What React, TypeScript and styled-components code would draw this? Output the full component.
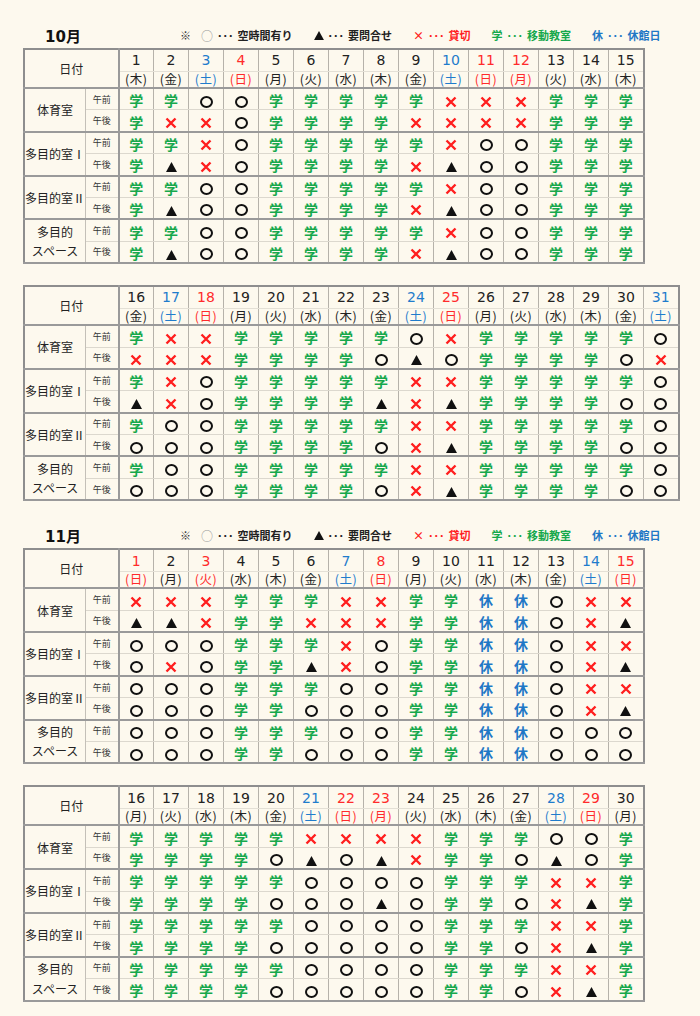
import React from 'react';
import styled, { createGlobalStyle } from 'styled-components';

const GlobalStyle = createGlobalStyle`
  html, body {
    margin: 0;
    padding: 0;
    background: #fdf9ee;
  }
  body {
    font-family: 'Noto Sans CJK JP', 'Noto Sans', sans-serif;
    color: #222;
  }
`;

type Tone = 'plain' | 'sat' | 'sun';

const HOLIDAYS = ['10-12', '11-3', '11-23'];
const WEEK = ['日', '月', '火', '水', '木', '金', '土'];

const ROOMS = [['体育室'], ['多目的室Ⅰ'], ['多目的室Ⅱ'], ['多目的', 'スペース']];

// g=学 o=○ t=▲ x=× k=休 ; 2 rows (午前/午後) per room
const MONTHS = [
  {
    month: 10,
    blocks: [
      {
        from: 1,
        to: 15,
        rows: [
          'ggoogggggxxxggg',
          'gxxoggggxxxxggg',
          'ggxogggggxooggg',
          'gtxoggggxtooggg',
          'ggoogggggxooggg',
          'gtooggggxtooggg',
          'ggoogggggxooggg',
          'gtooggggxtooggg',
        ],
      },
      {
        from: 16,
        to: 31,
        rows: [
          'gxxgggggoxgggggo',
          'xxxggggotoggggox',
          'gxogggggxxgggggo',
          'txoggggtxtggggoo',
          'googggggxxgggggo',
          'oooggggoxtggggoo',
          'googggggxxgggggo',
          'oooggggoxtggggoo',
        ],
      },
    ],
  },
  {
    month: 11,
    blocks: [
      {
        from: 1,
        to: 15,
        rows: [
          'xxxgggxxggkkoxx',
          'ttxggxxxggkkoxt',
          'ooogggxoggkkoxx',
          'oxoggtxoggkkoxt',
          'ooogggooggkkoxx',
          'oooggoooggkkoxt',
          'ooogggooggkkooo',
          'oooggoooggkkooo',
        ],
      },
      {
        from: 16,
        to: 30,
        rows: [
          'gggggxxxxgggoog',
          'ggggototxggotog',
          'gggggoooogggxxg',
          'ggggoootoggoxtg',
          'gggggoooogggxxg',
          'ggggoooooggoxtg',
          'gggggoooogggxxg',
          'ggggoooooggoxtg',
        ],
      },
    ],
  },
];

const toneOf = (m: number, d: number): Tone => {
  const wd = new Date(2020, m - 1, d).getDay();
  if (wd === 0 || HOLIDAYS.includes(`${m}-${d}`)) return 'sun';
  if (wd === 6) return 'sat';
  return 'plain';
};

const TONE_COLOR: Record<Tone, string> = {
  plain: '#222',
  sat: '#1f7ccc',
  sun: '#ff2b2b',
};

const Page = styled.div`
  padding: 22px 0 20px 23px;
  display: flex;
  flex-direction: column;
  gap: 21px;
`;

const Section = styled.section`
  display: flex;
  flex-direction: column;
`;

const Tables = styled.div`
  display: flex;
  flex-direction: column;
  align-items: flex-start;
  gap: 21px;
`;

const Heading = styled.div`
  height: 26px;
  display: flex;
  align-items: center;
  padding-left: 22px;
`;

const Title = styled.h2`
  width: 135px;
  margin: 0;
  font-family: 'DejaVu Sans', 'Noto Sans CJK JP', sans-serif;
  font-size: 15px;
  font-weight: 700;
  color: #111;
`;

const Legend = styled.div`
  display: flex;
  align-items: center;
  gap: 21px;
  font-size: 11px;
  font-weight: 700;
`;

const LegendItem = styled.span<{ $color: string }>`
  display: inline-flex;
  align-items: center;
  gap: 4px;
  color: ${(p) => p.$color};
`;

const Note = styled.span`
  color: #333;
  font-weight: 400;
  margin-right: 6px;
`;

const ThinCircle = styled.span`
  color: #999;
  font-weight: 400;
  font-size: 12px;
`;

const Table = styled.table`
  border-collapse: collapse;
  table-layout: fixed;
  border: 2px solid #8e8e8e;
  background: #fdf9ee;
`;

const Col = styled.col<{ $w: number }>`
  width: ${(p) => p.$w}px;
`;

const DateLabel = styled.th`
  font-size: 12px;
  font-weight: 400;
  border-right: 2px solid #9a9a9a;
  border-bottom: 2px solid #9a9a9a;
  padding: 0;
`;

const DayNum = styled.th<{ $tone: Tone }>`
  height: 20.5px;
  padding: 0;
  font-family: 'DejaVu Sans', sans-serif;
  font-size: 14px;
  font-weight: 400;
  line-height: 1;
  color: ${(p) => TONE_COLOR[p.$tone]};
  border-left: 1px solid #b6b2aa;
  border-bottom: 1px solid #e4e0d6;
  vertical-align: middle;
`;

const DayWeek = styled.th<{ $tone: Tone }>`
  height: 15.5px;
  padding: 0;
  font-size: 12.5px;
  font-weight: 400;
  letter-spacing: 0.5px;
  color: ${(p) => TONE_COLOR[p.$tone]};
  border-left: 1px solid #b6b2aa;
  border-bottom: 2px solid #9a9a9a;
  line-height: 1;
`;

const RoomCell = styled.th`
  font-size: 12px;
  font-weight: 400;
  line-height: 1.6;
  padding: 0;
  white-space: nowrap;
  border-right: 1px solid #c4c0b8;
  border-bottom: 2px solid #9a9a9a;
`;

const PeriodCell = styled.td<{ $end: boolean }>`
  height: 20.4px;
  padding: 0;
  font-size: 9px;
  line-height: 1;
  text-align: center;
  color: #333;
  border-right: 2px solid #9a9a9a;
  border-bottom: ${(p) => (p.$end ? '2px solid #9a9a9a' : '1px solid #dcd8ce')};
`;

const MarkCell = styled.td<{ $end: boolean }>`
  padding: 0;
  text-align: center;
  vertical-align: middle;
  line-height: 1;
  border-left: 1px solid #b6b2aa;
  border-bottom: ${(p) => (p.$end ? '2px solid #9a9a9a' : '1px solid #dcd8ce')};
`;

const Kanji = styled.span<{ $color: string }>`
  display: inline-block;
  font-size: 14px;
  font-weight: 700;
  line-height: 1;
  color: ${(p) => p.$color};
`;

const Ring = styled.span`
  display: inline-block;
  width: 13px;
  height: 12px;
  box-sizing: border-box;
  border: 2.4px solid #111;
  border-radius: 50%;
  vertical-align: middle;
`;

const Glyph = styled.svg`
  display: inline-block;
  vertical-align: middle;
`;

const Cross = () => (
  <Glyph width="12" height="12" viewBox="0 0 12 12">
    <path d="M1.5 1.5 L10.5 10.5 M10.5 1.5 L1.5 10.5" stroke="#ff1e1e" strokeWidth="2.4" />
  </Glyph>
);

const Tri = ({ size = 11 }: { size?: number }) => (
  <Glyph width={size} height={size - 1} viewBox="0 0 11 10">
    <polygon points="5.5,0 11,10 0,10" fill="#111" />
  </Glyph>
);

const Mark = ({ c }: { c: string }) => {
  switch (c) {
    case 'g':
      return <Kanji $color="#16a84c">学</Kanji>;
    case 'k':
      return <Kanji $color="#1f78c6">休</Kanji>;
    case 'o':
      return <Ring />;
    case 't':
      return <Tri />;
    default:
      return <Cross />;
  }
};

const MonthHeading = ({ month }: { month: number }) => (
  <Heading>
    <Title>{month}月</Title>
    <Legend>
      <LegendItem $color="#222">
        <Note>※</Note>
        <ThinCircle>○</ThinCircle>
        <span>･･･</span>
        <span>空時間有り</span>
      </LegendItem>
      <LegendItem $color="#222">
        <Tri size={10} />
        <span>･･･</span>
        <span>要問合せ</span>
      </LegendItem>
      <LegendItem $color="#ff1e1e">
        <span>×</span>
        <span>･･･</span>
        <span>貸切</span>
      </LegendItem>
      <LegendItem $color="#16a84c">
        <span>学</span>
        <span>･･･</span>
        <span>移動教室</span>
      </LegendItem>
      <LegendItem $color="#1f78c6">
        <span>休</span>
        <span>･･･</span>
        <span>休館日</span>
      </LegendItem>
    </Legend>
  </Heading>
);

const Schedule = ({ month, from, to, rows }: { month: number; from: number; to: number; rows: string[] }) => {
  const days = Array.from({ length: to - from + 1 }, (_, i) => from + i);
  return (
    <Table>
      <colgroup>
        <Col $w={59} />
        <Col $w={33} />
        {days.map((d) => (
          <Col key={d} $w={35} />
        ))}
      </colgroup>
      <thead>
        <tr>
          <DateLabel colSpan={2} rowSpan={2}>
            日付
          </DateLabel>
          {days.map((d) => (
            <DayNum key={d} $tone={toneOf(month, d)}>
              {d}
            </DayNum>
          ))}
        </tr>
        <tr>
          {days.map((d) => (
            <DayWeek key={d} $tone={toneOf(month, d)}>
              ({WEEK[new Date(2020, month - 1, d).getDay()]})
            </DayWeek>
          ))}
        </tr>
      </thead>
      <tbody>
        {rows.map((row, i) => {
          const end = i % 2 === 1;
          return (
            <tr key={i}>
              {!end && (
                <RoomCell rowSpan={2}>
                  {ROOMS[i / 2].map((line, j) => (
                    <React.Fragment key={j}>
                      {j > 0 && <br />}
                      {line}
                    </React.Fragment>
                  ))}
                </RoomCell>
              )}
              <PeriodCell $end={end}>{end ? '午後' : '午前'}</PeriodCell>
              {row.split('').map((c, j) => (
                <MarkCell key={j} $end={end}>
                  <Mark c={c} />
                </MarkCell>
              ))}
            </tr>
          );
        })}
      </tbody>
    </Table>
  );
};

const App = () => (
  <>
    <GlobalStyle />
    <Page>
      {MONTHS.map((m) => (
        <Section key={m.month}>
          <MonthHeading month={m.month} />
          <Tables>
            {m.blocks.map((b) => (
              <Schedule key={b.from} month={m.month} from={b.from} to={b.to} rows={b.rows} />
            ))}
          </Tables>
        </Section>
      ))}
    </Page>
  </>
);

export default App;
